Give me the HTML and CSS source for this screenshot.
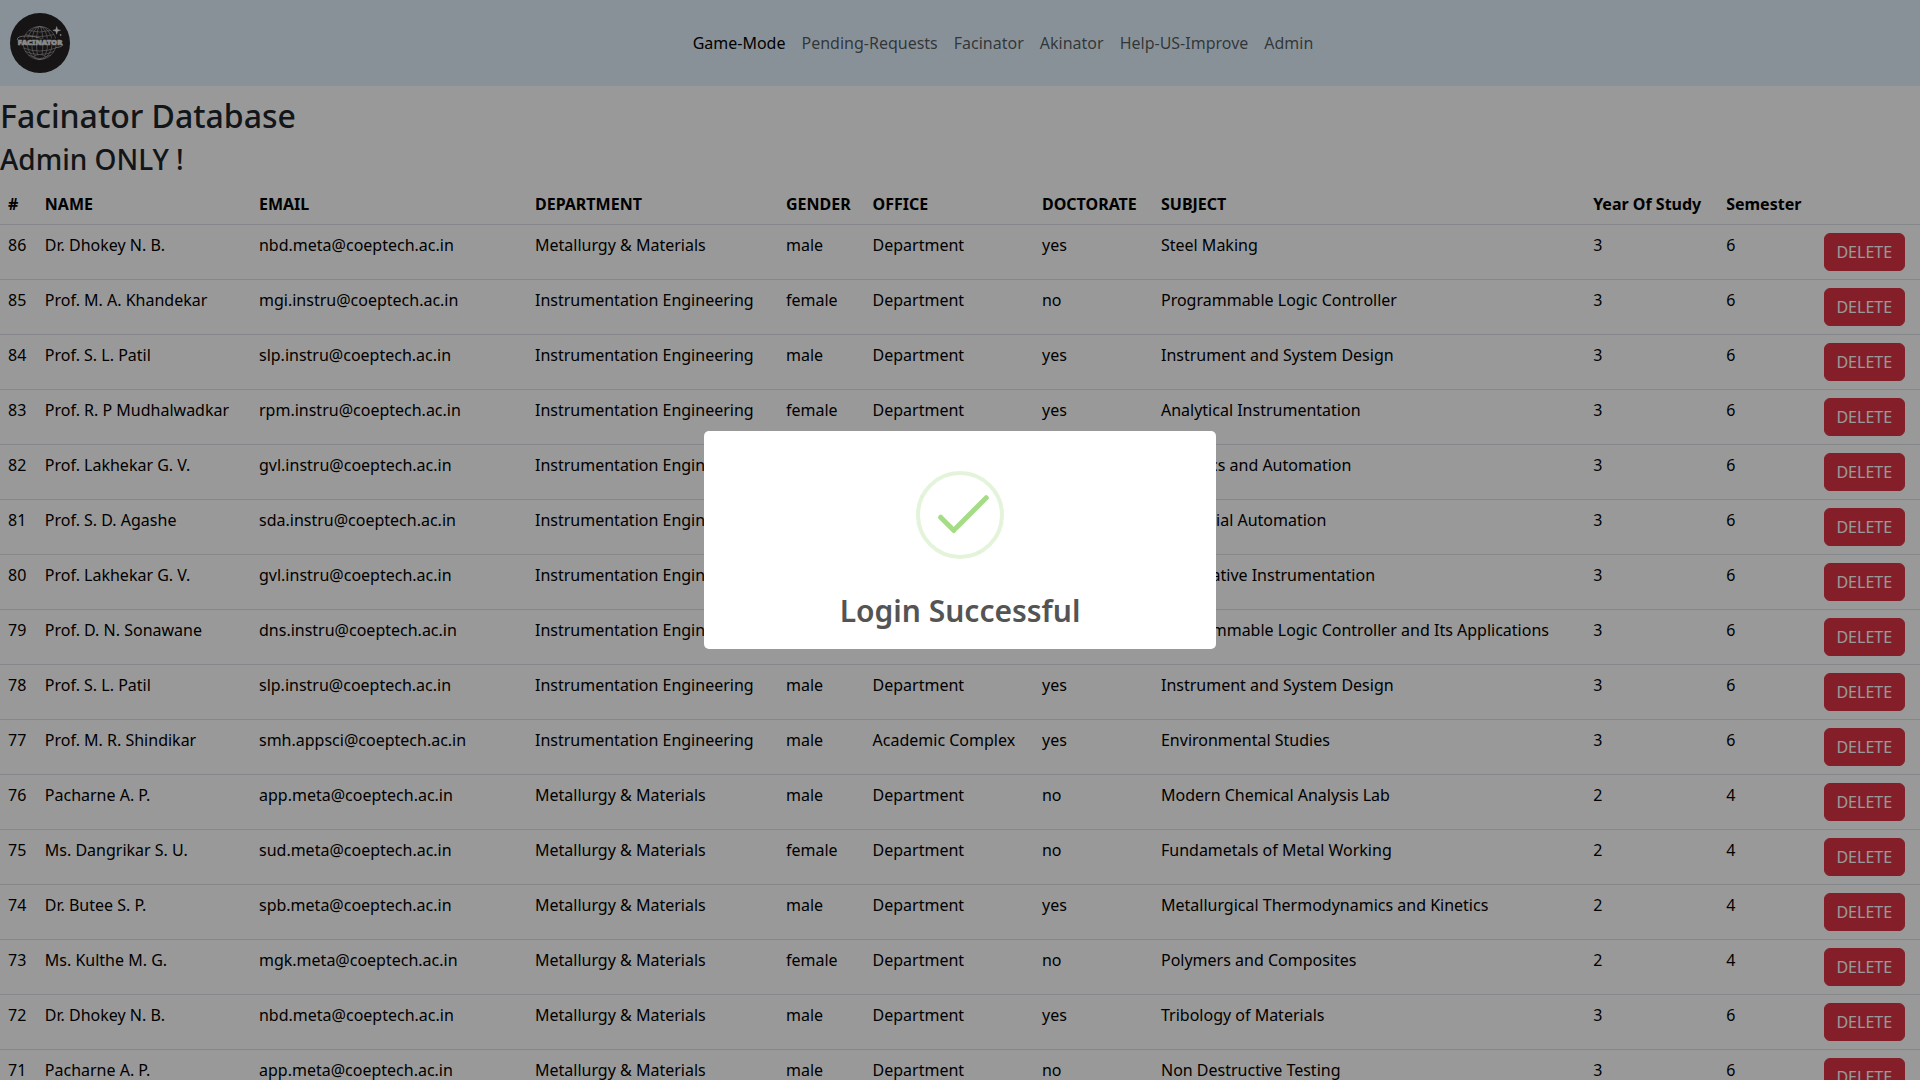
FILE: index.html
```html
<!DOCTYPE html>
<html lang="en">
<head>
<meta charset="utf-8">
<title>Facinator Database</title>
<link rel="stylesheet" href="styles.css">
</head>
<body>
<nav class="navbar">
  <a class="brand" href="#">
    <svg class="logo" viewBox="0 0 60 60">
      <circle cx="30" cy="30" r="30" fill="#252223"/>
      <g fill="none" stroke="#b5b3b4" stroke-width=".6">
        <circle cx="29.7" cy="30" r="16.5"/>
        <ellipse cx="29.7" cy="30" rx="12.5" ry="16.5"/>
        <ellipse cx="29.7" cy="30" rx="8" ry="16.5"/>
        <ellipse cx="29.7" cy="30" rx="3.2" ry="16.5"/>
        <path d="M19 17.500q10.700 3 21.400 0M15.500 21.500q14 4 28.400 0M13.500 35q16 6 32.400 0M15.500 38.500q14 6 28.400 0M18.500 42q11 5 22.400 0"/>
        <ellipse cx="29.700" cy="43.500" rx="5" ry="2" fill="#252223"/>
      </g>
      <path d="M7.500 27Q6 23 17 23Q25 23 33 26M46 34.500Q54 34 52 30.500" fill="none" stroke="#c9c8c8" stroke-width=".8"/>
      <path d="M8 25.500h44.500v6H8z" fill="#252223"/>
      <text class="logo-text" x="7.800" y="31.600" textLength="44.500" lengthAdjust="spacingAndGlyphs">FACINATOR</text>
      <path d="M46.700 13.500l.9 3 3 .8-3 .9-.9 3-.9-3-3-.9 3-.8z" fill="#f4f4f4" stroke="#f4f4f4" stroke-width=".4"/>
      <circle cx="50.600" cy="22" r=".9" fill="#ccc"/>
    </svg>
  </a>
  <div class="nav-links">
    <a class="active" href="#">Game-Mode</a>
    <a href="#">Pending-Requests</a>
    <a href="#">Facinator</a>
    <a href="#">Akinator</a>
    <a href="#">Help-US-Improve</a>
    <a href="#">Admin</a>
  </div>
</nav>
<main>
  <h2>Facinator Database</h2>
  <h3>Admin ONLY !</h3>
  <table>
    <colgroup><col class="c-id"><col class="c-name"><col class="c-email"><col class="c-dept"><col class="c-gender"><col class="c-office"><col class="c-doc"><col class="c-subject"><col class="c-year"><col class="c-sem"><col class="c-action"></colgroup>
    <thead>
      <tr><th>#</th><th>NAME</th><th>EMAIL</th><th>DEPARTMENT</th><th>GENDER</th><th>OFFICE</th><th>DOCTORATE</th><th>SUBJECT</th><th>Year Of Study</th><th>Semester</th><th></th></tr>
    </thead>
    <tbody>
      <tr><td>86</td><td>Dr. Dhokey N. B.</td><td>nbd.meta@coeptech.ac.in</td><td>Metallurgy &amp; Materials</td><td>male</td><td>Department</td><td>yes</td><td>Steel Making</td><td>3</td><td>6</td><td><button>DELETE</button></td></tr>
      <tr><td>85</td><td>Prof. M. A. Khandekar</td><td>mgi.instru@coeptech.ac.in</td><td>Instrumentation Engineering</td><td>female</td><td>Department</td><td>no</td><td>Programmable Logic Controller</td><td>3</td><td>6</td><td><button>DELETE</button></td></tr>
      <tr><td>84</td><td>Prof. S. L. Patil</td><td>slp.instru@coeptech.ac.in</td><td>Instrumentation Engineering</td><td>male</td><td>Department</td><td>yes</td><td>Instrument and System Design</td><td>3</td><td>6</td><td><button>DELETE</button></td></tr>
      <tr><td>83</td><td>Prof. R. P Mudhalwadkar</td><td>rpm.instru@coeptech.ac.in</td><td>Instrumentation Engineering</td><td>female</td><td>Department</td><td>yes</td><td>Analytical Instrumentation</td><td>3</td><td>6</td><td><button>DELETE</button></td></tr>
      <tr><td>82</td><td>Prof. Lakhekar G. V.</td><td>gvl.instru@coeptech.ac.in</td><td>Instrumentation Engineering</td><td>male</td><td>Department</td><td>yes</td><td>Robotics and Automation</td><td>3</td><td>6</td><td><button>DELETE</button></td></tr>
      <tr><td>81</td><td>Prof. S. D. Agashe</td><td>sda.instru@coeptech.ac.in</td><td>Instrumentation Engineering</td><td>male</td><td>Department</td><td>yes</td><td>Industrial Automation</td><td>3</td><td>6</td><td><button>DELETE</button></td></tr>
      <tr><td>80</td><td>Prof. Lakhekar G. V.</td><td>gvl.instru@coeptech.ac.in</td><td>Instrumentation Engineering</td><td>male</td><td>Department</td><td>yes</td><td>Automative Instrumentation</td><td>3</td><td>6</td><td><button>DELETE</button></td></tr>
      <tr><td>79</td><td>Prof. D. N. Sonawane</td><td>dns.instru@coeptech.ac.in</td><td>Instrumentation Engineering</td><td>male</td><td>Department</td><td>yes</td><td>Programmable Logic Controller and Its Applications</td><td>3</td><td>6</td><td><button>DELETE</button></td></tr>
      <tr><td>78</td><td>Prof. S. L. Patil</td><td>slp.instru@coeptech.ac.in</td><td>Instrumentation Engineering</td><td>male</td><td>Department</td><td>yes</td><td>Instrument and System Design</td><td>3</td><td>6</td><td><button>DELETE</button></td></tr>
      <tr><td>77</td><td>Prof. M. R. Shindikar</td><td>smh.appsci@coeptech.ac.in</td><td>Instrumentation Engineering</td><td>male</td><td>Academic Complex</td><td>yes</td><td>Environmental Studies</td><td>3</td><td>6</td><td><button>DELETE</button></td></tr>
      <tr><td>76</td><td>Pacharne A. P.</td><td>app.meta@coeptech.ac.in</td><td>Metallurgy &amp; Materials</td><td>male</td><td>Department</td><td>no</td><td>Modern Chemical Analysis Lab</td><td>2</td><td>4</td><td><button>DELETE</button></td></tr>
      <tr><td>75</td><td>Ms. Dangrikar S. U.</td><td>sud.meta@coeptech.ac.in</td><td>Metallurgy &amp; Materials</td><td>female</td><td>Department</td><td>no</td><td>Fundametals of Metal Working</td><td>2</td><td>4</td><td><button>DELETE</button></td></tr>
      <tr><td>74</td><td>Dr. Butee S. P.</td><td>spb.meta@coeptech.ac.in</td><td>Metallurgy &amp; Materials</td><td>male</td><td>Department</td><td>yes</td><td>Metallurgical Thermodynamics and Kinetics</td><td>2</td><td>4</td><td><button>DELETE</button></td></tr>
      <tr><td>73</td><td>Ms. Kulthe M. G.</td><td>mgk.meta@coeptech.ac.in</td><td>Metallurgy &amp; Materials</td><td>female</td><td>Department</td><td>no</td><td>Polymers and Composites</td><td>2</td><td>4</td><td><button>DELETE</button></td></tr>
      <tr><td>72</td><td>Dr. Dhokey N. B.</td><td>nbd.meta@coeptech.ac.in</td><td>Metallurgy &amp; Materials</td><td>male</td><td>Department</td><td>yes</td><td>Tribology of Materials</td><td>3</td><td>6</td><td><button>DELETE</button></td></tr>
      <tr><td>71</td><td>Pacharne A. P.</td><td>app.meta@coeptech.ac.in</td><td>Metallurgy &amp; Materials</td><td>male</td><td>Department</td><td>no</td><td>Non Destructive Testing</td><td>3</td><td>6</td><td><button>DELETE</button></td></tr>
    </tbody>
  </table>
</main>
<div class="overlay">
  <div class="popup" role="dialog">
    <svg class="success-icon" viewBox="0 0 88 88">
      <circle cx="44" cy="44" r="42" fill="none" stroke="#a5dc86" stroke-opacity=".3" stroke-width="4"/>
      <path d="M4.500 24.500l3 2M61.500 80.500l2 2" stroke="#a5dc86" stroke-opacity=".35" stroke-width=".6"/>
      <rect x="19.500" y="50.400" width="23.500" height="5" rx="2" fill="#a5dc86" transform="rotate(45 31.250 52.900)"/>
      <rect x="31.800" y="39.200" width="47" height="5" rx="2" fill="#a5dc86" transform="rotate(-45 55.300 41.700)"/>
    </svg>
    <h2 class="popup-title">Login Successful</h2>
  </div>
</div>
</body>
</html>
```

FILE: styles.css
```css
*, *::before, *::after { box-sizing: border-box; }

body {
  margin: 0;
  height: 100vh;
  overflow: hidden;
  font-family: "Noto Sans", "Liberation Sans", sans-serif;
  font-size: 16px;
  line-height: 1.5;
  color: #212529;
  background: #fff;
}

.navbar {
  display: flex;
  align-items: center;
  height: 86px;
  background: #e3f2fd;
}
.brand { display: block; margin: 0 16px 0 10px; }
.logo { display: block; width: 60px; height: 60px; }
.logo-text {
  font-family: "Noto Sans", sans-serif;
  font-size: 7.6px;
  font-weight: 900;
  fill: #e6e6e6;
  stroke: #e6e6e6;
  stroke-width: .6px;
}
.nav-links { display: flex; margin: 0 auto; }
.nav-links a {
  padding: 8px;
  color: rgba(0, 0, 0, .65);
  text-decoration: none;
}
.nav-links a.active { color: #000; }

main { padding-top: 11px; }
h2, h3 { margin: 0 0 8px; font-weight: 500; line-height: 1.2; }
h2 { font-size: 32px; }
h3 { margin-bottom: 7px; font-size: 28px; }

table {
  width: 100%;
  table-layout: fixed;
  border-collapse: collapse;
  color: #000;
}
th, td {
  padding: 8px;
  text-align: left;
  vertical-align: top;
  white-space: nowrap;
  border-bottom: 1px solid #dee2e6;
}
th { font-weight: 700; vertical-align: bottom; }
.c-id { width: 36.8px; }
.c-name { width: 214.2px; }
.c-email { width: 276px; }
.c-dept { width: 251px; }
.c-gender { width: 86.6px; }
.c-office { width: 169.4px; }
.c-doc { width: 119px; }
.c-subject { width: 432.2px; }
.c-year { width: 133px; }
.c-sem { width: 97.6px; }
.c-action { width: 104.2px; }

button {
  display: block;
  width: 81px;
  padding: 6px 0;
  font: inherit;
  color: #fff;
  background: #dc3545;
  border: 1px solid #dc3545;
  border-radius: 6px;
}

.overlay {
  position: fixed;
  inset: 0;
  display: flex;
  align-items: center;
  justify-content: center;
  background: rgba(0, 0, 0, .4);
}
.popup {
  width: 512px;
  padding-bottom: 20px;
  background: #fff;
  border-radius: 5px;
  color: #545454;
}
.success-icon {
  display: block;
  width: 88px;
  height: 88px;
  margin: 40px auto 9.6px;
}
.popup-title {
  margin: 0;
  padding: 24px 30px 0;
  font-size: 30px;
  font-weight: 600;
  text-align: center;
}
```
